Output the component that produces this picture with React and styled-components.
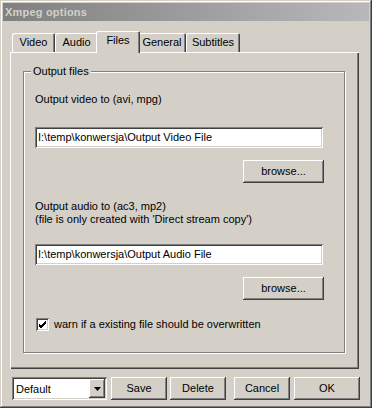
import React from "react";
import styled, { createGlobalStyle, css } from "styled-components";

const Global = createGlobalStyle`
  html, body { margin: 0; padding: 0; background: #d4d0c8; }
  body { font-family: "Liberation Sans", Arial, sans-serif; font-size: 11px; color: #000; }
  * { box-sizing: border-box; }
`;

const raised = css`
  box-shadow: inset -1px -1px #404040, inset 1px 1px #fff, inset -2px -2px #808080, inset 2px 2px #d4d0c8;
`;
const sunken = css`
  box-shadow: inset 1px 1px #808080, inset -1px -1px #fff, inset 2px 2px #404040, inset -2px -2px #d4d0c8;
`;

const Window = styled.div`
  width: 372px;
  height: 408px;
  background: #d4d0c8;
  padding: 3px;
  display: flex;
  flex-direction: column;
  box-shadow: inset -1px -1px #404040, inset 1px 1px #d4d0c8, inset -2px -2px #808080, inset 2px 2px #fff;
`;

const TitleBar = styled.div`
  height: 18px;
  background: linear-gradient(to right, #808080, #b8b8bc);
  color: #d4d0c8;
  font-weight: bold;
  font-size: 11px;
  line-height: 18px;
  padding-left: 2px;
  letter-spacing: 0.2px;
`;

const Body = styled.div`
  padding: 10px 0 0 7px;
  display: flex;
  flex-direction: column;
`;

const TabStrip = styled.div`
  display: flex;
  align-items: flex-end;
  height: 21px;
  padding-left: 2px;
`;

const Tab = styled.div`
  width: ${(p) => p.$w}px;
  height: ${(p) => (p.$active ? 22 : 19)}px;
  margin: ${(p) => (p.$active ? "0 -2px -1px -2px" : "0")};
  position: relative;
  z-index: ${(p) => (p.$active ? 1 : 0)};
  background: #d4d0c8;
  padding-top: 3px;
  line-height: 13px;
  text-align: center;
  border-radius: 2px 2px 0 0;
  box-shadow: inset 1px 1px #fff, inset -1px 0 #404040, inset -2px 0 #808080;
`;

const Panel = styled.div`
  width: 349px;
  height: 317px;
  padding: 19px 0 0 13px;
  box-shadow: inset 1px 1px #fff, inset -1px -1px #404040, inset -2px -2px #808080;
`;

const GroupBox = styled.div`
  position: relative;
  width: 322px;
  height: 282px;
  border: 1px solid #808080;
  box-shadow: inset 1px 1px #fff, 1px 1px 0 #fff;
  padding: 21px 0 0 11px;
  display: flex;
  flex-direction: column;
`;

const Legend = styled.span`
  position: absolute;
  top: -7px;
  left: 7px;
  padding: 0 2px;
  background: #d4d0c8;
  line-height: 13px;
`;

const Label = styled.div`
  line-height: 13px;
  margin-top: ${(p) => p.$mt || 0}px;
`;

const TextInput = styled.div`
  width: 288px;
  height: 21px;
  background: #fff;
  margin-top: ${(p) => p.$mt}px;
  padding: 0 3px;
  line-height: 21px;
  white-space: nowrap;
  overflow: hidden;
  ${sunken}
`;

const ButtonRow = styled.div`
  width: 289px;
  display: flex;
  justify-content: flex-end;
  margin-top: 12px;
`;

const Button = styled.div`
  width: ${(p) => p.$w}px;
  height: 23px;
  display: flex;
  align-items: center;
  justify-content: center;
  padding-bottom: 1px;
  margin-left: ${(p) => p.$ml || 0}px;
  ${raised}
`;

const CheckRow = styled.div`
  display: flex;
  align-items: center;
  gap: 5px;
  margin-top: 18px;
  padding-left: 1px;
  line-height: 13px;
`;

const CheckBox = styled.div`
  width: 13px;
  height: 13px;
  background: #fff;
  display: flex;
  align-items: center;
  justify-content: center;
  ${sunken}
`;

const Footer = styled.div`
  display: flex;
  align-items: center;
  margin-top: 8px;
  padding-left: 2px;
`;

const Select = styled.div`
  width: 95px;
  height: 23px;
  background: #fff;
  display: flex;
  align-items: center;
  padding: 2px;
  ${sunken}
`;

const SelectText = styled.div`
  flex: 1;
  padding-left: 2px;
`;

const DropButton = styled.div`
  width: 16px;
  height: 19px;
  background: #d4d0c8;
  display: flex;
  align-items: center;
  justify-content: center;
  ${raised}
`;

export default function App() {
  return (
    <>
      <Global />
      <Window>
        <TitleBar>Xmpeg options</TitleBar>
        <Body>
          <TabStrip>
            <Tab $w={43}>Video</Tab>
            <Tab $w={43}>Audio</Tab>
            <Tab $w={44} $active>Files</Tab>
            <Tab $w={48}>General</Tab>
            <Tab $w={54}>Subtitles</Tab>
          </TabStrip>
          <Panel>
            <GroupBox>
              <Legend>Output files</Legend>
              <Label>Output video to (avi, mpg)</Label>
              <TextInput $mt={21}>I:\temp\konwersja\Output Video File</TextInput>
              <ButtonRow>
                <Button $w={81}>browse...</Button>
              </ButtonRow>
              <Label $mt={17}>
                Output audio to (ac3, mp2)
                <br />
                (file is only created with 'Direct stream copy')
              </Label>
              <TextInput $mt={18}>I:\temp\konwersja\Output Audio File</TextInput>
              <ButtonRow>
                <Button $w={81}>browse...</Button>
              </ButtonRow>
              <CheckRow>
                <CheckBox>
                  <svg width="9" height="9" viewBox="0 0 9 9">
                    <path d="M1 4 L3 6 L8 1 M1 5 L3 7 L8 2 M1 6 L3 8 L8 3" stroke="#000" strokeWidth="1" fill="none" />
                  </svg>
                </CheckBox>
                warn if a existing file should be overwritten
              </CheckRow>
            </GroupBox>
          </Panel>
          <Footer>
            <Select>
              <SelectText>Default</SelectText>
              <DropButton>
                <svg width="7" height="4" viewBox="0 0 7 4">
                  <path d="M0 0 H7 L3.5 4 Z" fill="#000" />
                </svg>
              </DropButton>
            </Select>
            <Button $w={56} $ml={4}>Save</Button>
            <Button $w={56} $ml={3}>Delete</Button>
            <Button $w={56} $ml={8}>Cancel</Button>
            <Button $w={66} $ml={4}>OK</Button>
          </Footer>
        </Body>
      </Window>
    </>
  );
}
